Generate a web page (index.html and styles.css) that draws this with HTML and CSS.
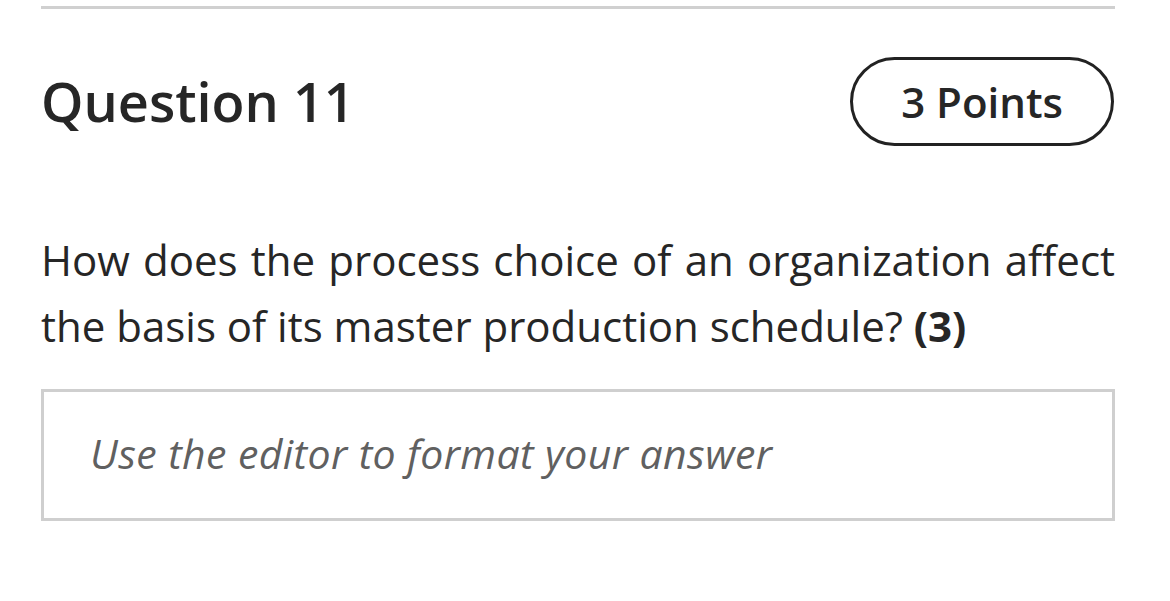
FILE: index.html
```html
<!DOCTYPE html>
<html>
<head>
<meta charset="utf-8">
<link rel="stylesheet" href="styles.css">
</head>
<body>
<div class="page">
  <div class="rule"></div>
  <div class="header">
    <h2 class="title">Question 11</h2>
    <div class="points">3 Points</div>
  </div>
  <p class="question">How does the process choice of an organization affect the basis of its master production schedule? <b>(3)</b></p>
  <div class="answer">Use the editor to format your answer</div>
</div>
</body>
</html>
```
FILE: styles.css
```css
html, body {
  margin: 0;
  padding: 0;
  background: #fff;
}
body {
  font-family: "Open Sans", sans-serif;
  color: #262626;
}
.page {
  width: 1074px;
  margin-left: 41px;
  padding-top: 6px;
}
.rule {
  height: 3px;
  background: #d0d0d0;
}
.header {
  display: flex;
  justify-content: space-between;
  align-items: center;
  margin-top: 47px;
}
.title {
  margin: 0;
  font-size: 54px;
  font-weight: 600;
  line-height: 90px;
}
.points {
  box-sizing: border-box;
  height: 89px;
  padding: 0 48px;
  border: 3px solid #222;
  border-radius: 45px;
  font-size: 42px;
  font-weight: 600;
  line-height: 83px;
  margin-right: 1px;
}
.question {
  margin: 81px 0 0;
  font-size: 42px;
  line-height: 66px;
  font-weight: 400;
  text-align: justify;
}
.question b {
  font-weight: 700;
}
.answer {
  box-sizing: border-box;
  margin-top: 30px;
  height: 132px;
  border: 3px solid #cfcfcf;
  padding: 0 46px;
  font-size: 41px;
  letter-spacing: 0.4px;
  font-style: italic;
  color: #606060;
  line-height: 122px;
}
```
